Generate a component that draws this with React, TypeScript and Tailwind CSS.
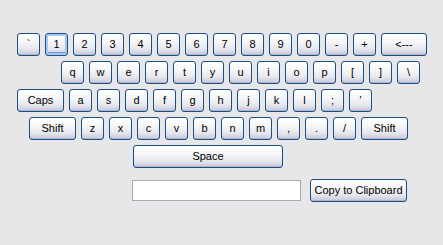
import React from 'react';

const keyBase =
  'h-[23px] flex items-center justify-center rounded-[3px] border border-[#1c4f82] text-[11px] text-[#000] leading-none bg-[linear-gradient(to_bottom,#ffffff_0%,#f6f6f8_40%,#e4e4ec_75%,#c5c5d8_100%)]';

function Key({ label, w = 23, focus = false }: { label: string; w?: number; focus?: boolean }) {
  return (
    <button
      tabIndex={-1}
      className={`${keyBase} ${
        focus
          ? 'shadow-[inset_0_0_0_2px_#a8c6f2,inset_0_-3px_0_0_#6e98dc]'
          : 'shadow-[inset_0_-1px_0_#b4b4cc]'
      }`}
      style={{ width: w }}
    >
      {label}
    </button>
  );
}

const row1 = ['`', '1', '2', '3', '4', '5', '6', '7', '8', '9', '0', '-', '+'];
const row2 = ['q', 'w', 'e', 'r', 't', 'y', 'u', 'i', 'o', 'p', '[', ']', '\\'];
const row3 = ['a', 's', 'd', 'f', 'g', 'h', 'j', 'k', 'l', ';', "'"];
const row4 = ['z', 'x', 'c', 'v', 'b', 'n', 'm', ',', '.', '/'];

export default function App() {
  return (
    <div
      className="w-[443px] h-[245px] bg-[#e7e7ea] pt-[33px] flex flex-col"
      style={{ fontFamily: '"Liberation Sans", Arial, sans-serif' }}
    >
      <div className="flex flex-col gap-[5px]">
        <div className="flex gap-[5px] ml-[17px]">
          {row1.map(k => <Key key={k} label={k} focus={k === '1'} />)}
          <Key label="<---" w={46} />
        </div>
        <div className="flex gap-[5px] ml-[61px]">
          {row2.map(k => <Key key={k} label={k} />)}
        </div>
        <div className="flex gap-[5px] ml-[17px]">
          <Key label="Caps" w={47} />
          {row3.map(k => <Key key={k} label={k} />)}
        </div>
        <div className="flex gap-[5px] ml-[29px]">
          <Key label="Shift" w={47} />
          {row4.map(k => <Key key={k} label={k} />)}
          <Key label="Shift" w={47} />
        </div>
        <div className="flex ml-[133px]">
          <Key label="Space" w={150} />
        </div>
      </div>
      <div className="flex items-center mt-[11px] ml-[132px] gap-[9px]">
        <input className="w-[169px] h-[21px] bg-white border border-[#a5acb2] outline-none px-1 text-[11px]" />
        <Key label="Copy to Clipboard" w={97} />
      </div>
    </div>
  );
}
